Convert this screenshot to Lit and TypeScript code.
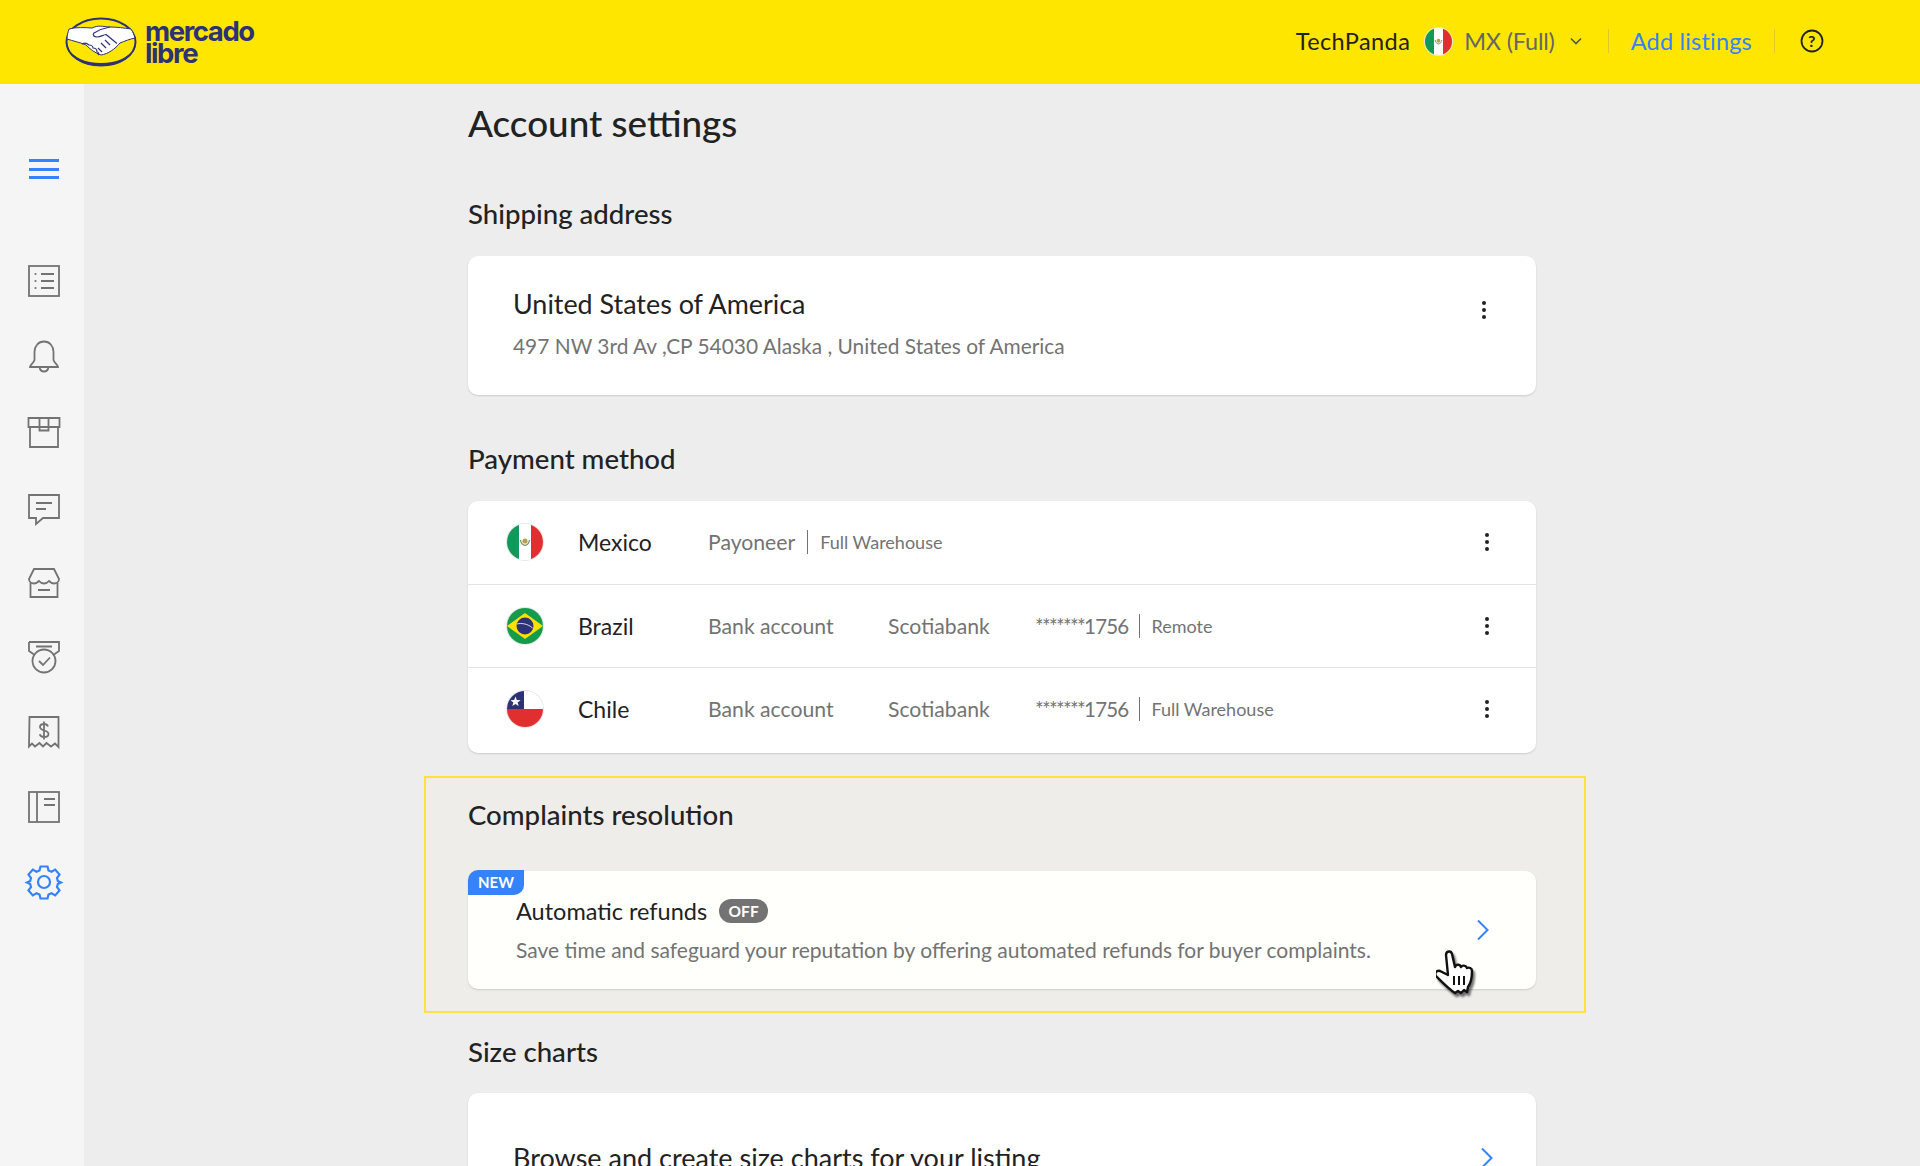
import { LitElement, html, css } from "lit";
import { customElement } from "lit/decorators.js";

const kebab = html`<svg class="kebab" width="4" height="20" viewBox="0 0 4 20"><circle cx="2" cy="3" r="2"/><circle cx="2" cy="10" r="2"/><circle cx="2" cy="17" r="2"/></svg>`;
const chevron = html`<svg class="chev" width="14" height="22" viewBox="0 0 14 22"><path d="M2 1.500 11.500 11 2 20.500"/></svg>`;

const mxFlag = html`<svg viewBox="0 0 36 36"><rect width="12" height="36" fill="#11985a"/><rect x="12" width="12" height="36" fill="#fff"/><rect x="24" width="12" height="36" fill="#e12f2f"/><circle cx="18" cy="17" r="2.600" fill="#b4a24a"/><path d="M13.500 16c.3 3 2 4.800 4.500 5.300 2.500-.5 4.200-2.300 4.500-5.300" fill="none" stroke="#7d9560" stroke-width="1.300"/></svg>`;
const brFlag = html`<svg viewBox="0 0 36 36"><rect width="36" height="36" fill="#149b4c"/><path d="M0 18 18 5l18 13-18 13z" fill="#ffe100"/><circle cx="18" cy="18" r="8.500" fill="#2d3277"/><path d="M9.800 16c5-1.200 11-.2 15.800 4" fill="none" stroke="#ddd" stroke-width="1"/></svg>`;
const clFlag = html`<svg viewBox="0 0 36 36"><rect width="36" height="18" fill="#fff"/><rect width="17" height="18" fill="#2d3277"/><rect y="18" width="36" height="18" fill="#e12f2f"/><path d="m8.500 5.500 1.300 3.600 3.800.1-3 2.300 1.100 3.600-3.200-2.100-3.200 2.100 1.100-3.600-3-2.300 3.800-.1z" fill="#fff"/></svg>`;

const sideIcons = [
  html`<svg viewBox="0 0 34 34"><rect x="2" y="2" width="30" height="30"/><path d="M14 10h13M14 17h13M14 24h13"/><circle class="dot" cx="8.500" cy="10" r="1.100"/><circle class="dot" cx="8.500" cy="17" r="1.100"/><circle class="dot" cx="8.500" cy="24" r="1.100"/></svg>`,
  html`<svg viewBox="0 0 34 34"><path d="M3 28c0-2 3.500-3.500 4.500-7V13C7.500 7 11.500 2.500 17 2.500S26.500 7 26.500 13v8c1 3.500 4.500 5 4.500 7z"/><path d="M12.500 28c.5 3 2.300 4.500 4.500 4.500s4-1.500 4.500-4.500"/></svg>`,
  html`<svg viewBox="0 -1 34 34"><path d="M1.500 3h31v9h-31zM3 12v20h28V12M12.500 3v12.500h9V3"/></svg>`,
  html`<svg viewBox="0 -4 34 34"><path d="M2 2h30v23H16l-7 6v-6H2z"/><path d="M9 10h16M9 16h10"/></svg>`,
  html`<svg viewBox="0 -2 34 34"><path d="M7 3h20l5 10c0 3-2.500 4.500-5 4.500-2 0-3.500-1-5-2.500-1.200 1.500-3 2.500-5 2.500s-3.800-1-5-2.500c-1.500 1.500-3 2.500-5 2.500-2.500 0-5-1.500-5-4.500z"/><path d="M3.500 17v14h27V17M11 24h12"/></svg>`,
  html`<svg viewBox="0 0 34 34"><path d="M2 2h30v9l-5 3.500M2 2v9l5 3.500M9 6.500h16"/><circle cx="17" cy="21" r="11.500"/><path d="m12 21 4 4 7-7.500"/></svg>`,
  html`<svg viewBox="0 0 34 34"><path d="M2.500 2h29v30l-3.500-3.500-4 3-4.500-3.500-3.500 3.500-3.500-3.500-4.500 3.500-3-3-3 3z"/><path d="M21 11.500c-.5-1.500-2-2.500-4-2.500-2.300 0-4 1.200-4 3 0 4.500 8.500 2.500 8.500 7 0 2-1.800 3-4.500 3-2.200 0-3.800-1-4.300-2.700M17 6.500v18"/></svg>`,
  html`<svg viewBox="0 0 34 34"><rect x="2" y="2" width="30" height="30"/><path d="M10 2v30M17 9h11M17 15h11"/></svg>`,
];

@customElement("app-root")
export class AppRoot extends LitElement {
  static styles = css`
    :host {
      display: block;
      height: 1166px;
      overflow: hidden;
      position: relative;
      background: #ededed;
      font-family: Lato, "Open Sans", sans-serif;
      color: #222;
    }
    .topbar {
      height: 84px;
      background: #ffe600;
      display: flex;
      align-items: center;
      padding: 0 96px 0 65px;
    }
    .logo {
      display: flex;
      align-items: center;
      gap: 8px;
    }
    .logo-text {
      color: #2d3277;
      font-family: Inter, sans-serif;
      font-weight: 700;
      font-size: 27.500px;
      line-height: 22px;
      letter-spacing: -1.400px;
    }
    .top-right {
      margin-left: auto;
      display: flex;
      align-items: center;
      font-size: 23.500px;
      letter-spacing: 0.400px;
      padding-bottom: 2px;
    }
    .flag.top-flag {
      width: 27px;
      height: 27px;
      margin: 0 12px 0 15px;
    }
    .country {
      color: #666;
      letter-spacing: -0.200px;
    }
    .add {
      color: #3483fa;
      letter-spacing: 0.200px;
    }
    .caret {
      margin-left: 15px;
      fill: none;
      stroke: #555;
      stroke-width: 1.600;
    }
    .sep {
      width: 1px;
      height: 24px;
      background: #dcc92a;
    }
    .sep.first {
      margin: 0 22px 0 26px;
    }
    .sep.second {
      margin: 0 25px 0 22px;
    }
    .help {
      fill: none;
      stroke: #222;
      stroke-width: 1.800;
    }
    .help text {
      fill: #222;
      stroke: none;
      font-size: 16px;
      font-family: Lato, sans-serif;
      font-weight: 700;
    }
    .body {
      display: flex;
    }
    .sidebar {
      width: 84px;
      height: 1082px;
      flex: none;
      background: #f5f5f5;
      display: flex;
      flex-direction: column;
      align-items: center;
      padding: 75px 0 0 3px;
      box-sizing: border-box;
    }
    .burger {
      width: 30px;
      height: 20px;
      display: flex;
      flex-direction: column;
      justify-content: space-between;
      margin-bottom: 64.500px;
    }
    .burger i {
      display: block;
      height: 3px;
      background: #3483fa;
    }
    .nav {
      width: 34px;
      height: 34px;
      margin: 20.550px 0;
    }
    .nav svg {
      display: block;
      width: 34px;
      height: 34px;
      overflow: visible;
      fill: none;
      stroke: #737373;
      stroke-width: 1.800;
    }
    .nav .dot {
      fill: #737373;
      stroke: none;
    }
    .nav.active svg {
      stroke: #3483fa;
      stroke-width: 2.200;
    }
    main {
      width: 1068px;
      margin-left: 384px;
    }
    h1 {
      margin: 19px 0 0;
      font-size: 36.800px;
      line-height: 40px;
      font-weight: 500;
    }
    h2 {
      margin: 0;
      font-size: 27.600px;
      line-height: 30px;
      font-weight: 500;
    }
    .ship-title {
      margin-top: 56px;
    }
    .pay-title {
      margin-top: 49px;
    }
    .card {
      background: #fff;
      border-radius: 10px;
      box-shadow: 0 1px 2px rgba(0, 0, 0, 0.14);
      margin-top: 27px;
    }
    .address {
      height: 139px;
      box-sizing: border-box;
      padding: 32px 50px 0 45px;
      display: flex;
      justify-content: space-between;
    }
    .addr-name {
      font-size: 26.900px;
      line-height: 32px;
    }
    .addr-line {
      margin-top: 13px;
      font-size: 20.900px;
      line-height: 26px;
      color: #737373;
    }
    .address .kebab {
      margin-top: 12px;
    }
    .kebab {
      fill: #222;
      flex: none;
    }
    .row {
      height: 83.500px;
      display: flex;
      align-items: center;
      padding: 0 47px 0 39px;
      border-bottom: 1px solid #e4e4e4;
      box-sizing: border-box;
    }
    .row:last-child {
      height: 85px;
      padding-bottom: 4px;
      border-bottom: 0;
    }
    .flag {
      width: 36px;
      height: 36px;
      flex: none;
      border-radius: 50%;
      overflow: hidden;
      box-shadow: 0 0 0 1px #e6e6e6;
    }
    .flag svg {
      display: block;
      width: 100%;
      height: 100%;
    }
    .name {
      width: 130px;
      margin-left: 35px;
      font-size: 23px;
    }
    .col {
      font-size: 21.200px;
      color: #737373;
    }
    .col.method {
      width: 180px;
    }
    .col.bank {
      width: 147px;
    }
    .mask {
      font-size: 20.500px;
      color: #737373;
      letter-spacing: -0.800px;
    }
    .mask span {
      letter-spacing: -1.700px;
    }
    .bar {
      width: 1px;
      height: 24px;
      background: #737373;
      margin: 0 11px;
    }
    .col.inline + .bar {
      margin: 0 12px;
    }
    .tag {
      font-size: 18px;
      color: #737373;
    }
    .row .kebab {
      margin-left: auto;
    }
    .highlight {
      margin: 23px -50px 0 -44px;
      padding: 22px 48px 22px 42px;
      border: 2px solid #fde23d;
      box-sizing: border-box;
      background: #eeedea;
      width: 1162px;
    }
    .refunds {
      margin-top: 41px;
      height: 118px;
      background: #fffffb;
      position: relative;
      padding: 0 46px 0 48px;
      box-sizing: border-box;
      display: flex;
      align-items: center;
    }
    .badge {
      position: absolute;
      left: 0;
      top: -1px;
      width: 56px;
      height: 25px;
      background: #3483fa;
      color: #fff;
      font-size: 15px;
      font-weight: 700;
      line-height: 25px;
      text-align: center;
      border-radius: 10px 0 10px 0;
    }
    .refund-body {
      flex: 1;
      align-self: flex-start;
      padding-top: 25px;
    }
    .refund-title {
      display: flex;
      align-items: center;
      gap: 12px;
      font-size: 23.500px;
      line-height: 30px;
    }
    .pill {
      background: #737373;
      color: #fff;
      font-size: 15.500px;
      font-weight: 700;
      width: 49px;
      height: 24px;
      line-height: 24px;
      text-align: center;
      border-radius: 12px;
    }
    .refund-desc {
      margin-top: 11px;
      font-size: 21px;
      line-height: 26px;
      color: #737373;
    }
    .chev {
      fill: none;
      stroke: #3483fa;
      stroke-width: 2;
      flex: none;
    }
    .cursor {
      position: absolute;
      left: 968px;
      top: 78px;
      filter: drop-shadow(2px 3px 1px rgba(0, 0, 0, 0.55));
    }
    .size-title {
      margin-top: 24px;
    }
    .charts {
      height: 200px;
      padding: 51px 42px 0 45px;
      box-sizing: border-box;
      display: flex;
      justify-content: space-between;
      align-items: flex-start;
      font-size: 27px;
      line-height: 28px;
      margin-top: 26px;
    }
    .charts .chev {
      margin-top: 3px;
    }
  `;

  render() {
    return html`
      <header class="topbar">
        <div class="logo">
          <svg width="72" height="50" viewBox="0 0 72 50">
            <ellipse cx="36" cy="25" rx="34.500" ry="23.500" fill="#ffe600" stroke="#2d3277" stroke-width="2"/>
            <path d="M2 31c4 11 18 18 34 18s30-7 34-18c-6 9-18 15-34 15S8 40 2 31z" fill="#2d3277"/>
            <path d="M4 12c8-2 15-1.500 23-1 6-3 11-1.500 18-1 7 0 14 1 21 2 2 3 3 6 4 9-5 1-10 3-15 5-5 6-12 11-19 12-6-2-11-6-15-10-7-3-13-4-19-6 0-3 1-7 2-10z" fill="#fff" stroke="#2d3277" stroke-width="1"/>
            <path d="M45 10c-6 1-11 3-16 6-2 2 0 4 3 4 4-.5 6-2 9-2.500l11 9M41 31l-5-5M45 28l-5-5M37 35l-4-4" fill="none" stroke="#2d3277" stroke-width="1.200"/>
            <path d="M17 27c3-2 6 0 7 1 3 0 4 2 4 3 3 0 4 2 4 4 2 0 2 2 1 3" fill="none" stroke="#2d3277" stroke-width="1.200"/>
          </svg>
          <div class="logo-text">mercado<br />libre</div>
        </div>
        <div class="top-right">
          <span>TechPanda</span>
          <div class="flag top-flag">${mxFlag}</div>
          <span class="country">MX (Full)</span>
          <svg class="caret" width="12" height="8" viewBox="0 0 12 8"><path d="M1 1.500 6 6.500l5-5"/></svg>
          <div class="sep first"></div>
          <span class="add">Add listings</span>
          <div class="sep second"></div>
          <svg class="help" width="24" height="24" viewBox="0 0 24 24"><circle cx="12" cy="12" r="10.500"/><text x="12" y="17.500" text-anchor="middle">?</text></svg>
        </div>
      </header>
      <div class="body">
        <aside class="sidebar">
          <div class="burger"><i></i><i></i><i></i></div>
          ${sideIcons.map((icon) => html`<div class="nav">${icon}</div>`)}
          <div class="nav active">
            <svg viewBox="0 0 34 34"><circle cx="17" cy="17" r="6"/><path d="M13.500 1.500h7l1 4 3 1.300 3.700-2.200 4.300 5-2.500 3.400.8 3 3.200 1.500-3.200 1.500-.8 3 2.500 3.400-4.300 5-3.700-2.200-3 1.300-1 4h-7l-1-4-3-1.300-3.700 2.200-4.300-5 2.500-3.400-.8-3-3.200-1.500 3.200-1.500.8-3-2.500-3.400 4.300-5 3.700 2.200 3-1.300z"/></svg>
          </div>
        </aside>
        <main>
          <h1>Account settings</h1>

          <h2 class="ship-title">Shipping address</h2>
          <div class="card address">
            <div>
              <div class="addr-name">United States of America</div>
              <div class="addr-line">497 NW 3rd Av ,CP 54030 Alaska , United States of America</div>
            </div>
            ${kebab}
          </div>

          <h2 class="pay-title">Payment method</h2>
          <div class="card">
            <div class="row">
              <div class="flag">${mxFlag}</div>
              <div class="name">Mexico</div>
              <div class="col inline">Payoneer</div>
              <div class="bar"></div>
              <div class="tag">Full Warehouse</div>
              ${kebab}
            </div>
            <div class="row">
              <div class="flag">${brFlag}</div>
              <div class="name">Brazil</div>
              <div class="col method">Bank account</div>
              <div class="col bank">Scotiabank</div>
              <div class="mask"><span>*******</span>1756</div>
              <div class="bar"></div>
              <div class="tag">Remote</div>
              ${kebab}
            </div>
            <div class="row">
              <div class="flag">${clFlag}</div>
              <div class="name">Chile</div>
              <div class="col method">Bank account</div>
              <div class="col bank">Scotiabank</div>
              <div class="mask"><span>*******</span>1756</div>
              <div class="bar"></div>
              <div class="tag">Full Warehouse</div>
              ${kebab}
            </div>
          </div>

          <section class="highlight">
            <h2>Complaints resolution</h2>
            <div class="card refunds">
              <div class="badge">NEW</div>
              <div class="refund-body">
                <div class="refund-title">Automatic refunds <span class="pill">OFF</span></div>
                <div class="refund-desc">Save time and safeguard your reputation by offering automated refunds for buyer complaints.</div>
              </div>
              ${chevron}
              <svg class="cursor" width="40" height="46" viewBox="0 0 40 46">
                <path d="M12 26 10 6c0-4 5-5 6-1l3 13c1-3 5-3 6 0 1-2 5-2 6 1 2-1 5 0 5 3 0 7-1 12-4 16l-1 5-3-2-3 3-3-2-3 2c-6-4-13-11-19-17-2-3 1-6 4-5z" fill="#fff" stroke="#111" stroke-width="2.400" stroke-linejoin="round"/>
                <path d="M18 27v9M23 27v9M28 27v9" stroke="#111" stroke-width="2" fill="none"/>
              </svg>
            </div>
          </section>

          <h2 class="size-title">Size charts</h2>
          <div class="card charts">
            <span>Browse and create size charts for your listing</span>
            ${chevron}
          </div>
        </main>
      </div>
    `;
  }
}
